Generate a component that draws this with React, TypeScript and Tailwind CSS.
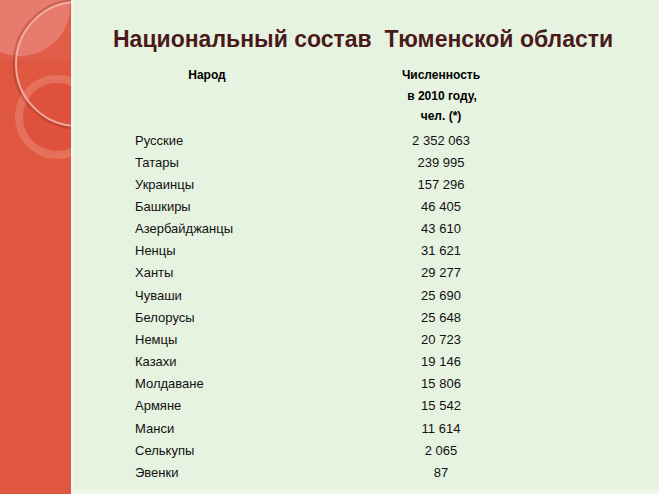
const rows: [string, string][] = [
  ["Русские", "2 352 063"],
  ["Татары", "239 995"],
  ["Украинцы", "157 296"],
  ["Башкиры", "46 405"],
  ["Азербайджанцы", "43 610"],
  ["Ненцы", "31 621"],
  ["Ханты", "29 277"],
  ["Чуваши", "25 690"],
  ["Белорусы", "25 648"],
  ["Немцы", "20 723"],
  ["Казахи", "19 146"],
  ["Молдаване", "15 806"],
  ["Армяне", "15 542"],
  ["Манси", "11 614"],
  ["Селькупы", "2 065"],
  ["Эвенки", "87"],
];

const SideDecor = () => (
  <svg width="71" height="494" viewBox="0 0 71 494" className="block">
    <rect width="71" height="494" fill="#e0573f" />
    <rect width="71" height="60" fill="#e15d4a" />
    <circle cx="20" cy="6" r="50" fill="#ea8a7d" opacity="0.7" />
    <circle cx="57" cy="117" r="38" fill="#d94a38" opacity="0.35" />
    <circle cx="57" cy="117" r="38" fill="none" stroke="#ef9a8d" strokeWidth="8" opacity="0.4" />
    <circle cx="78" cy="64" r="64" fill="none" stroke="#8a2a22" strokeWidth="3" opacity="0.3" />
    <circle cx="78" cy="64" r="62" fill="none" stroke="#f6b8ab" strokeWidth="2" opacity="0.85" />
  </svg>
);

export default function App() {
  return (
    <div className="flex w-[659px] h-[494px] overflow-hidden bg-[#e7f3e1] font-['Liberation_Sans',Arial,sans-serif]">
      <div className="w-[71px] shrink-0 border-r border-[#b8473a]">
        <SideDecor />
      </div>
      <div className="w-[2px] shrink-0 bg-[#eef5ea]" />
      <div className="flex-1 flex flex-col border-b-[5px] border-[#eef6ea]">
        <h1 className="pt-[26px] pl-[40px] text-[23px] leading-[27px] font-bold text-[#4a1a1a] whitespace-pre">
          Национальный состав  Тюменской области
        </h1>
        <div className="ml-[55px] mt-[12px] w-[470px]">
          <div className="flex text-[12px] font-bold text-black leading-[20.5px]">
            <div className="w-[156px] text-center pl-[2px]">Народ</div>
            <div className="w-[314px] text-center">
              <div>Численность</div>
              <div className="pl-[2px]">в 2010 году,</div>
              <div>чел. (*)</div>
            </div>
          </div>
          <div className="mt-[3px] text-[13px] text-[#111] leading-[22.15px]">
            {rows.map(([name, count]) => (
              <div key={name} className="flex">
                <div className="w-[156px] pl-[7px]">{name}</div>
                <div className="w-[314px] text-center">{count}</div>
              </div>
            ))}
          </div>
        </div>
      </div>
    </div>
  );
}
